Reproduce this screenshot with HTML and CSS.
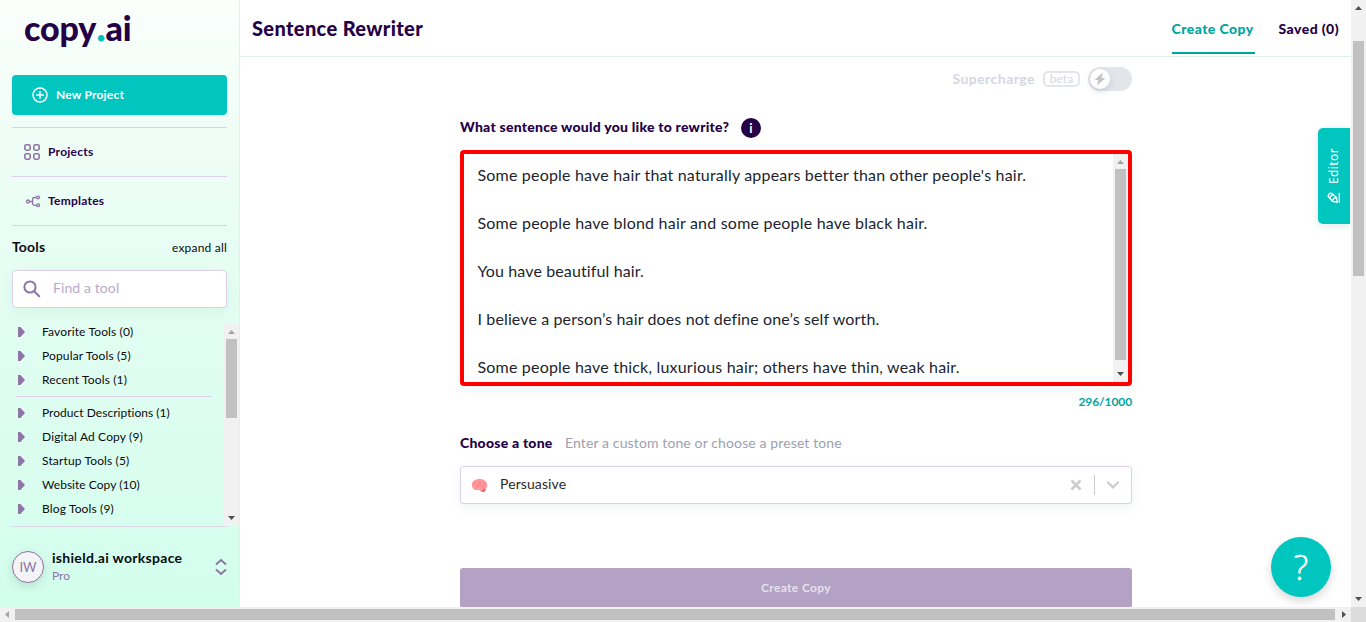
FILE: index.html
```html
<!DOCTYPE html>
<html lang="en">
<head>
<meta charset="utf-8">
<title>Sentence Rewriter</title>
<link rel="stylesheet" href="styles.css">
</head>
<body>
<div class="window">
  <div class="app">
    <aside class="sidebar">
      <div class="logo">copy<span class="logo-dot">.</span>ai</div>
      <button class="new-project">
        <svg width="16" height="16" viewBox="0 0 16 16" fill="none" stroke="currentColor" stroke-width="1.5" stroke-linecap="round"><circle cx="8" cy="8" r="7"/><path d="M8 4.700v6.600M4.700 8h6.600"/></svg>
        <span class="t-new">New Project</span>
      </button>
      <nav class="nav">
        <a class="nav-item"><svg width="16" height="16" viewBox="0 0 16 16" fill="none" stroke="currentColor" stroke-width="1.6"><rect x=".8" y=".8" width="5.400" height="5.400" rx="1.600"/><rect x="9.800" y=".8" width="5.400" height="5.400" rx="1.600"/><rect x=".8" y="9.800" width="5.400" height="5.400" rx="1.600"/><rect x="9.800" y="9.800" width="5.400" height="5.400" rx="1.600"/></svg><span class="t-projects">Projects</span></a>
        <a class="nav-item"><svg width="16" height="16" viewBox="0 0 16 16" fill="none" stroke="currentColor" stroke-width="1.300"><circle cx="4" cy="8.500" r="1.500"/><circle cx="14" cy="4.500" r="1.400"/><circle cx="14" cy="12.300" r="1.400"/><path d="M5.600 8.500h3M12.600 4.500h-2.300q-1.700 0-1.700 1.700v4.400q0 1.700 1.700 1.700h2.300"/></svg><span class="t-templates">Templates</span></a>
      </nav>
      <div class="tools-head"><span class="tools-title">Tools</span><span class="expand">expand all</span></div>
      <div class="search"><svg width="18" height="18" viewBox="0 0 18 18" fill="none" stroke="currentColor" stroke-width="2" stroke-linecap="round"><circle cx="7" cy="7" r="5.600"/><path d="M11.200 11.200l5 5"/></svg><span>Find a tool</span></div>
      <div class="tool-scroll">
        <ul class="tools">
          <li><i class="caret"></i><span>Favorite Tools (0)</span></li>
          <li><i class="caret"></i><span>Popular Tools (5)</span></li>
          <li><i class="caret"></i><span>Recent Tools (1)</span></li>
          <li class="rule"></li>
          <li><i class="caret"></i><span class="wide">Product Descriptions (1)</span></li>
          <li><i class="caret"></i><span>Digital Ad Copy (9)</span></li>
          <li><i class="caret"></i><span>Startup Tools (5)</span></li>
          <li><i class="caret"></i><span class="wide">Website Copy (10)</span></li>
          <li><i class="caret"></i><span>Blog Tools (9)</span></li>
        </ul>
        <div class="vbar tools-bar"><i class="up dim"></i><b></b><i class="down"></i></div>
      </div>
      <div class="workspace">
        <div class="avatar">IW</div>
        <div class="ws-text"><div class="ws-name">ishield.ai workspace</div><div class="ws-plan">Pro</div></div>
        <svg class="ws-sort" width="12" height="18" viewBox="0 0 12 18" fill="none" stroke="currentColor" stroke-width="2"><path d="M1 6.500L6 2l5 4.500M1 11.500L6 16l5-4.500"/></svg>
      </div>
    </aside>
    <div class="main">
      <header class="topbar">
        <h1>Sentence Rewriter</h1>
        <div class="tabs"><a class="tab active">Create Copy</a><a class="tab">Saved (0)</a></div>
      </header>
      <section class="form">
        <div class="supercharge"><span class="super-label">Supercharge</span><span class="beta">beta</span>
          <span class="toggle"><span class="knob"><svg width="12" height="14" viewBox="0 0 12 14" fill="#c4c4c4"><path d="M8.800.6L.6 7.900h3.700L3 13.600 11.500 5.900H7.600z"/></svg></span></span>
        </div>
        <div class="label-row"><span class="question">What sentence would you like to rewrite?</span><span class="info">i</span></div>
        <div class="editor-box">
          <div class="copy">
            <p>Some people have hair that naturally appears better than other people's hair.</p>
            <p class="p2">Some people have blond hair and some people have black hair.</p>
            <p class="p3">You have beautiful hair.</p>
            <p class="p4">I believe a person’s hair does not define one’s self worth.</p>
            <p>Some people have thick, luxurious hair; others have thin, weak hair.</p>
          </div>
          <div class="vbar box-bar"><i class="up dim"></i><b></b><i class="down"></i></div>
        </div>
        <div class="count"><span>296/1000</span></div>
        <div class="tone-row"><span class="tone-label">Choose a tone</span><span class="tone-hint">Enter a custom tone or choose a preset tone</span></div>
        <div class="select">
          <svg width="17" height="15" viewBox="0 0 17 15"><path d="M10 10.500l5-.8-.8 3.500-2.200.9-2.500-1z" fill="#d95566"/><path d="M.8 6.700C1 3.300 4 1 8.500 1s7.500 2.500 7.700 6c0 2.600-1.300 3.900-3 4.200L10.500 13l-2.500-1-3 .1C2.300 11.500.6 9.500.8 6.700z" fill="#ff979b"/><path d="M2.500 6.500q2-1 1.500-2.500M5 9.500q1-2 3-1.500M6.500 4q2-1 3.500.5M10.500 9.500q1-2 3-1.500M7 6.500q2 0 3-1M12.500 4.500q1 1 1 2" fill="none" stroke="#ee7380" stroke-width=".7"/></svg>
          <span class="tone-value">Persuasive</span>
          <svg class="clear" width="12" height="12" viewBox="0 0 12 12" fill="none" stroke="currentColor" stroke-width="2.700"><path d="M1.500 1.500l9 9M10.500 1.500l-9 9"/></svg>
          <i class="sep"></i>
          <svg class="chev" width="14" height="10" viewBox="0 0 14 10" fill="none" stroke="currentColor" stroke-width="2.300" stroke-linecap="round"><path d="M2 2.500l5 4.800 5-4.800"/></svg>
        </div>
        <button class="submit"><span>Create Copy</span></button>
      </section>
      <div class="editor-tab"><svg width="14" height="12" viewBox="0 0 14 12" fill="none" stroke="currentColor" stroke-width="1.300" stroke-linejoin="round"><path d="M1.300 4.800C.6 2.300 2.800.6 5 1.600L9.500 5.500 10.300 10.300 5.500 9.300zM2.800 6.400Q3 3.500 6 2.800M5.500 9Q6 6 9.300 5.500"/><path d="M12.300 1v9.800"/></svg><span>Editor</span></div>
      <div class="help">?</div>
    </div>
  </div>
  <div class="vbar page-bar"><i class="up"></i><b></b><i class="down"></i></div>
  <div class="hbar"><i class="left"></i><b></b><i class="right"></i></div>
  <div class="corner"></div>
</div>
</body>
</html>
```

FILE: styles.css
```css
* { box-sizing: border-box; }
body { margin: 0; overflow: hidden; font-family: Lato, "Liberation Sans", sans-serif; color: #0b0b0f; font-size: 12px; font-variant-ligatures: none; }
button { border: 0; font: inherit; }
h1, p, ul { margin: 0; padding: 0; }
span, a, h1, p { white-space: nowrap; }
svg { flex: none; display: block; }

.window { width: 1366px; height: 622px; display: grid; grid-template: 607px 15px / 1351px 15px; }
.app { display: grid; grid-template-columns: 240px 1fr; overflow: hidden; height: 607px; background: #fff; }

/* Sidebar */
.sidebar { height: 607px; padding: 0 0 0 12px; display: flex; flex-direction: column; background: linear-gradient(#fafffc, #eefdf6 25%, #dffdf1 60%, #d2feec); border-right: 1px solid #e3f1eb; }
.logo { height: 75px; padding: 8px 0 0 12px; font: 900 34px/40px Lato, sans-serif; letter-spacing: -.1px; color: #240047; }
.logo-dot { color: #00c4bc; -webkit-text-stroke: 1px #00c4bc; margin: 0 .5px; }
.new-project { width: 215px; height: 40px; flex: none; margin-bottom: 12px; padding: 0 0 0 20px; display: flex; align-items: center; gap: 8px; border-radius: 4px; background: #00c6bf; color: #fff; font-weight: 700; letter-spacing: .2px; }
.t-new, .submit span { padding-bottom: 2px; }
.nav { width: 215px; flex: none; border-bottom: 1px solid #dfd0e8; }
.nav-item { height: 49px; display: flex; align-items: center; gap: 8px; padding-left: 12px; border-top: 1px solid #dfd0e8; color: #8f75a5; }
.nav-item span { padding-bottom: 2px; color: #2a0050; font-weight: 700; letter-spacing: .25px; }
.tools-head { width: 215px; height: 44px; flex: none; padding-bottom: 2px; display: flex; justify-content: space-between; align-items: center; }
.tools-title { padding-bottom: 1px; font-size: 14px; font-weight: 700; letter-spacing: .15px; }
.expand { letter-spacing: .2px; }
.search { width: 215px; height: 38px; flex: none; display: flex; align-items: center; gap: 12px; padding-left: 10px; border: 1px solid #dfd0e8; border-radius: 4px; background: #fff; color: #8f75a5; box-shadow: 0 4px 12px rgba(80, 150, 120, .08); }
.search span { padding-bottom: 3px; font-size: 14px; color: #bbaac9; letter-spacing: .1px; }
.tool-scroll { height: 202px; margin-top: 16px; flex: none; display: flex; justify-content: space-between; }
.tools { width: 200px; height: 202px; list-style: none; padding-left: 4px; }
.tools li { height: 24px; display: flex; align-items: center; gap: 17px; padding: 0 0 8px 2px; }
.tools li span { line-height: 16px; letter-spacing: .14px; }
.tools li .wide { letter-spacing: .03px; }
.tools .rule { height: 1px; margin: 0 0 8px; padding: 0; background: #dfd0e8; }
.caret { width: 7px; height: 10px; background: #8f75a5; clip-path: polygon(0 0, 35% 0, 100% 50%, 35% 100%, 0 100%); }
.workspace { width: 215px; height: 81px; display: flex; align-items: center; border-top: 1px solid #dbd7e6; }
.avatar { width: 32px; height: 32px; display: grid; place-items: center; border: 1px solid #8f75a5; border-radius: 50%; background: #f4f4f7; color: #8f75a5; font-size: 13px; box-shadow: 0 3px 8px rgba(80, 120, 110, .22); }
.ws-text { flex: 1; padding-left: 8px; }
.ws-name { font-size: 14px; font-weight: 700; line-height: 18px; letter-spacing: .3px; }
.ws-plan { color: #8f75a5; line-height: 18px; }
.ws-sort { color: #8f75a5; }

/* Main */
.main { position: relative; height: 607px; overflow: hidden; background: #fff; }
.topbar { height: 57px; padding: 0 12px; display: flex; justify-content: space-between; border-bottom: 1px solid #dbf1e5; color: #240047; }
h1 { font-size: 20px; line-height: 57px; font-weight: 900; letter-spacing: .36px; }
.tabs { display: flex; gap: 24px; }
.tab { height: 54px; line-height: 57px; font-size: 14px; font-weight: 900; letter-spacing: .43px; }
.active { width: 83px; color: #00a59d; border-bottom: 2px solid #00a59d; }
.form { width: 672px; margin-left: 220px; }
.supercharge { height: 42px; display: flex; align-items: center; justify-content: flex-end; color: #d5d7df; }
.super-label { font-size: 14px; font-weight: 700; letter-spacing: .46px; }
.beta { width: 37px; height: 16px; margin: 2px 8px 0; border: 2px solid #e4e4eb; border-radius: 5px; font-size: 12px; line-height: 11px; text-align: center; }
.toggle { width: 44px; height: 24px; margin-bottom: -1px; padding: 2px; border-radius: 12px; background: #e4e4eb; }
.knob { width: 20px; height: 20px; display: grid; place-items: center; border-radius: 50%; background: #fff; box-shadow: 0 3px 6px rgba(80, 120, 120, .2); }
.label-row { height: 51px; display: flex; align-items: center; padding-top: 5px; }
.question { width: 281px; padding-bottom: 1px; font-size: 14px; font-weight: 900; color: #240047; letter-spacing: .24px; }
.info { width: 20px; height: 20px; margin-top: 1px; border-radius: 50%; background: #240047; color: #fff; font-size: 13px; font-weight: 700; line-height: 20px; text-align: center; }
.editor-box { height: 236px; display: flex; justify-content: space-between; border: 4px solid #f00; border-radius: 4px; overflow: hidden; box-shadow: 0 4px 12px rgba(80, 120, 120, .08); }
.copy { padding: 9px 0 0 13.5px; display: grid; grid-auto-rows: 24px; gap: 24px; font-size: 16px; line-height: 24px; color: #211f30; letter-spacing: .19px; }
.p2 { letter-spacing: .21px; }
.p3 { letter-spacing: .12px; }
.p4 { letter-spacing: .125px; }
.count { height: 32px; display: flex; align-items: center; justify-content: flex-end; padding-bottom: 2px; color: #00a59d; font-weight: 700; letter-spacing: -.1px; }
.tone-row { height: 48px; display: flex; align-items: center; font-size: 14px; }
.tone-label { width: 105px; font-weight: 900; color: #240047; letter-spacing: .23px; }
.tone-hint { color: #9d9fb0; letter-spacing: .12px; }
.select { height: 38px; display: flex; align-items: center; padding: 0 11px 0 10px; border: 1px solid #dcd0e8; border-radius: 3px; color: #ccc; box-shadow: 0 4px 12px rgba(80, 120, 120, .08); }
.tone-value { margin-left: 12px; padding-bottom: 3px; flex: 1; font-size: 14px; color: #292929; letter-spacing: .1px; }
.sep { width: 1px; height: 20px; margin: 0 11px 0 12px; background: #ccc; }
.submit { display: flex; align-items: center; justify-content: center; width: 672px; height: 40px; margin-top: 64px; padding: 0; border-radius: 3px; background: #b3a2c4; color: #e7e1ed; font-weight: 700; letter-spacing: .37px; }
.editor-tab { position: absolute; right: 1px; top: 128px; width: 32px; height: 96px; padding-bottom: 20px; display: flex; flex-direction: column-reverse; align-items: center; gap: 8px; border-radius: 5px 0 0 5px; background: #00c6bf; color: #fff; box-shadow: 0 2px 8px rgba(0, 80, 80, .12); }
.editor-tab span { writing-mode: vertical-rl; transform: rotate(180deg); font: 12px/16px "Noto Sans", sans-serif; letter-spacing: .4px; }
.help { position: absolute; left: 1031px; top: 537px; width: 60px; height: 60px; border-radius: 50%; background: #00c6bf; color: #fff; font: 300 34px/60px "Open Sans", sans-serif; -webkit-text-stroke: .6px #fff; text-align: center; box-shadow: 0 4px 10px rgba(0, 0, 0, .16); }

/* Scrollbars */
.vbar { width: 15px; height: 100%; display: flex; flex-direction: column; align-items: center; background: #f1f1f1; }
.vbar i, .hbar i { flex: none; width: 15px; height: 15px; background: #505050; }
.vbar .dim, .hbar .left { background: #a3a3a3; }
.up { clip-path: polygon(7.5px 6px, 11px 10px, 4px 10px); }
.down { margin-top: auto; clip-path: polygon(4px 5px, 11px 5px, 7.5px 9px); }
.left { clip-path: polygon(5px 7.5px, 9px 4px, 9px 11px); }
.right { margin-left: auto; clip-path: polygon(6px 4px, 10px 7.5px, 6px 11px); }
.vbar b { width: 11px; background: #c1c1c1; }
.page-bar b { height: 235px; margin-top: 26px; }
.tools-bar b { height: 79px; }
.box-bar b { height: 191px; }
.hbar { display: flex; align-items: center; background: #f1f1f1; }
.hbar b { height: 11px; width: 1320px; background: #c1c1c1; }
.corner { background: #dcdcdc; }
```
